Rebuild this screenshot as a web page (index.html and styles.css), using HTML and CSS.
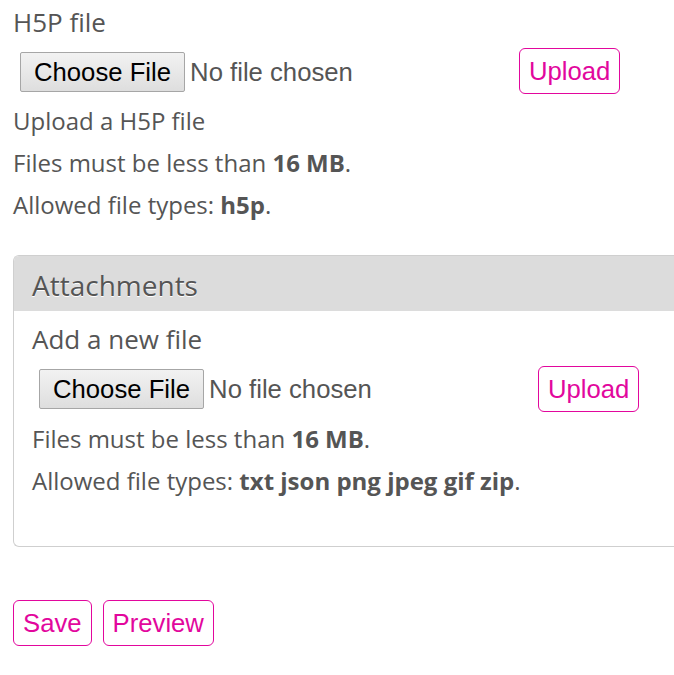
FILE: index.html
```html
<!DOCTYPE html>
<html>
<head>
<meta charset="utf-8">
<link rel="stylesheet" href="styles.css">
</head>
<body>
<div class="page">
  <div class="field">
    <div class="label">H5P file</div>
    <div class="file-row">
      <div class="file-input">
        <button class="choose" type="button">Choose File</button>
        <span class="no-file">No file chosen</span>
      </div>
      <button class="pink-btn" type="button">Upload</button>
    </div>
    <div class="desc">Upload a H5P file</div>
    <div class="desc">Files must be less than <strong>16 MB</strong>.</div>
    <div class="desc">Allowed file types: <strong>h5p</strong>.</div>
  </div>

  <div class="panel">
    <div class="panel-head">Attachments</div>
    <div class="panel-body">
      <div class="label">Add a new file</div>
      <div class="file-row">
        <div class="file-input">
          <button class="choose" type="button">Choose File</button>
          <span class="no-file">No file chosen</span>
        </div>
        <button class="pink-btn" type="button">Upload</button>
      </div>
      <div class="desc">Files must be less than <strong>16 MB</strong>.</div>
      <div class="desc">Allowed file types: <strong>txt json png jpeg gif zip</strong>.</div>
    </div>
  </div>

  <div class="actions">
    <button class="pink-btn" type="button">Save</button>
    <button class="pink-btn" type="button">Preview</button>
  </div>
</div>
</body>
</html>
```

FILE: styles.css
```css
html, body {
  margin: 0;
  padding: 0;
  background: #fff;
}
body {
  overflow: hidden;
}
.page {
  padding: 7px 0 0 13px;
  font-family: "Open Sans", sans-serif;
  color: #555;
  font-size: 24px;
}
.label {
  font-size: 26px;
  line-height: 30px;
}
.file-row {
  display: flex;
  align-items: center;
  margin-top: 11px;
  margin-bottom: 8px;
}
.file-input {
  display: flex;
  align-items: center;
  width: 506px;
  padding-left: 7px;
  padding-top: 2px;
  box-sizing: border-box;
  font-family: "Liberation Sans", Arial, sans-serif;
  font-size: 25.7px;
}
.choose {
  font-family: "Liberation Sans", Arial, sans-serif;
  font-size: 25.7px;
  color: #000;
  height: 40px;
  padding: 0 13px;
  border: 1px solid #a6a6a6;
  border-radius: 2px;
  background: linear-gradient(#f2f2f2, #dedede);
  margin: 0 5px 0 0;
  line-height: 38px;
}
.no-file {
  color: #555;
}
.pink-btn {
  font-family: "Liberation Sans", Arial, sans-serif;
  font-size: 25.7px;
  color: #e2079d;
  background: #fff;
  border: 1px solid #e2079d;
  border-radius: 6px;
  height: 46px;
  padding: 0 9px;
  margin: 0;
  line-height: 44px;
}
.desc {
  line-height: 30px;
  margin-top: 12px;
}
.desc strong {
  font-weight: 700;
}
.panel {
  margin-top: 35px;
  border: 1px solid #cfcfcf;
  border-right: none;
  border-radius: 6px 0 0 6px;
  width: 700px;
  overflow: hidden;
}
.panel-head {
  background: #dcdcdc;
  height: 55px;
  line-height: 58px;
  padding-left: 18px;
  font-size: 28px;
  text-shadow: 0 1px 0 #fff;
}
.panel-body {
  padding: 12px 0 50px 18px;
}
.panel-body .label {
  font-size: 26px;
  line-height: 32px;
}
.panel-body .file-input {
  padding-top: 0;
}
.actions {
  display: flex;
  gap: 11px;
  margin-top: 53px;
}
```
